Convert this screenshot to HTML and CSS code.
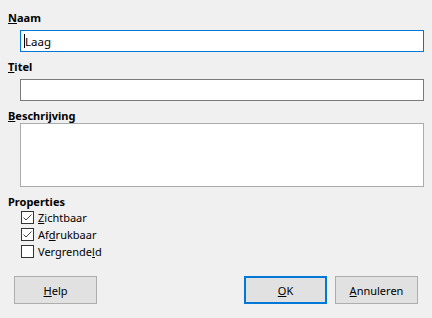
FILE: index.html
```html
<!DOCTYPE html>
<html lang="nl">
<head>
  <meta charset="UTF-8" />
  <title>Laag</title>
  <link rel="stylesheet" href="styles.css">
</head>
<body>
  <div class="dialog">
    <div class="caption"><u>N</u>aam</div>
    <div class="entry focused"><span class="caret"></span>Laag</div>

    <div class="caption"><u>T</u>itel</div>
    <div class="entry"></div>

    <div class="caption"><u>B</u>eschrijving</div>
    <div class="entry memo"></div>

    <div class="caption props">Properties</div>
    <div class="checks">
      <div class="check-row">
        <span class="box">
          <svg width="11" height="11" viewBox="0 0 11 11"><polyline points="1.5,5.5 4,8 9.5,2.5" fill="none" stroke="#444" stroke-width="1"/></svg>
        </span>
        <span><u>Z</u>ichtbaar</span>
      </div>
      <div class="check-row">
        <span class="box">
          <svg width="11" height="11" viewBox="0 0 11 11"><polyline points="1.5,5.5 4,8 9.5,2.5" fill="none" stroke="#444" stroke-width="1"/></svg>
        </span>
        <span>Af<u>d</u>rukbaar</span>
      </div>
      <div class="check-row">
        <span class="box"></span>
        <span>Vergrende<u>l</u>d</span>
      </div>
    </div>

    <div class="buttons">
      <button class="btn"><u>H</u>elp</button>
      <div class="spacer"></div>
      <button class="btn default"><u>O</u>K</button>
      <button class="btn"><u>A</u>nnuleren</button>
    </div>
  </div>
</body>
</html>
```

FILE: styles.css
```css
html, body {
  margin: 0;
  padding: 0;
  background: #f0f0f0;
}

.dialog {
  width: 432px;
  height: 318px;
  box-sizing: border-box;
  padding: 10px 8px 14px 8px;
  display: flex;
  flex-direction: column;
  font-family: "Noto Sans", "Open Sans", sans-serif;
  font-size: 11px;
  color: #000;
}

.caption {
  font-weight: bold;
  line-height: 15px;
  height: 15px;
}

.entry {
  margin: 5px 0 7px 12px;
  height: 22px;
  box-sizing: border-box;
  border: 1px solid #7a7a7a;
  background: #fff;
  line-height: 19px;
  padding-left: 3px;
  display: flex;
  align-items: center;
  font-size: 11.5px;
}

.entry.focused {
  border-color: #0078d7;
}

.caret {
  display: inline-block;
  width: 1px;
  height: 14px;
  background: #000;
}

.entry.memo {
  margin-top: 0;
  height: 64px;
  border-color: #ababab;
}

.checks {
  display: flex;
  flex-direction: column;
  margin-left: 13px;
}

.check-row {
  display: flex;
  align-items: center;
  height: 17px;
  gap: 4px;
}

.box {
  width: 13px;
  height: 13px;
  box-sizing: border-box;
  border: 1px solid #333;
  background: #fff;
  display: flex;
  align-items: center;
  justify-content: center;
}

.buttons {
  margin-top: auto;
  display: flex;
  gap: 8px;
  padding: 0 6px;
}

.spacer {
  flex: 1;
}

.btn {
  width: 83px;
  height: 28px;
  box-sizing: border-box;
  border: 1px solid #adadad;
  background: #e1e1e1;
  font: inherit;
  color: #000;
  padding: 0;
}

.btn.default {
  border: 2px solid #0078d7;
}
```
